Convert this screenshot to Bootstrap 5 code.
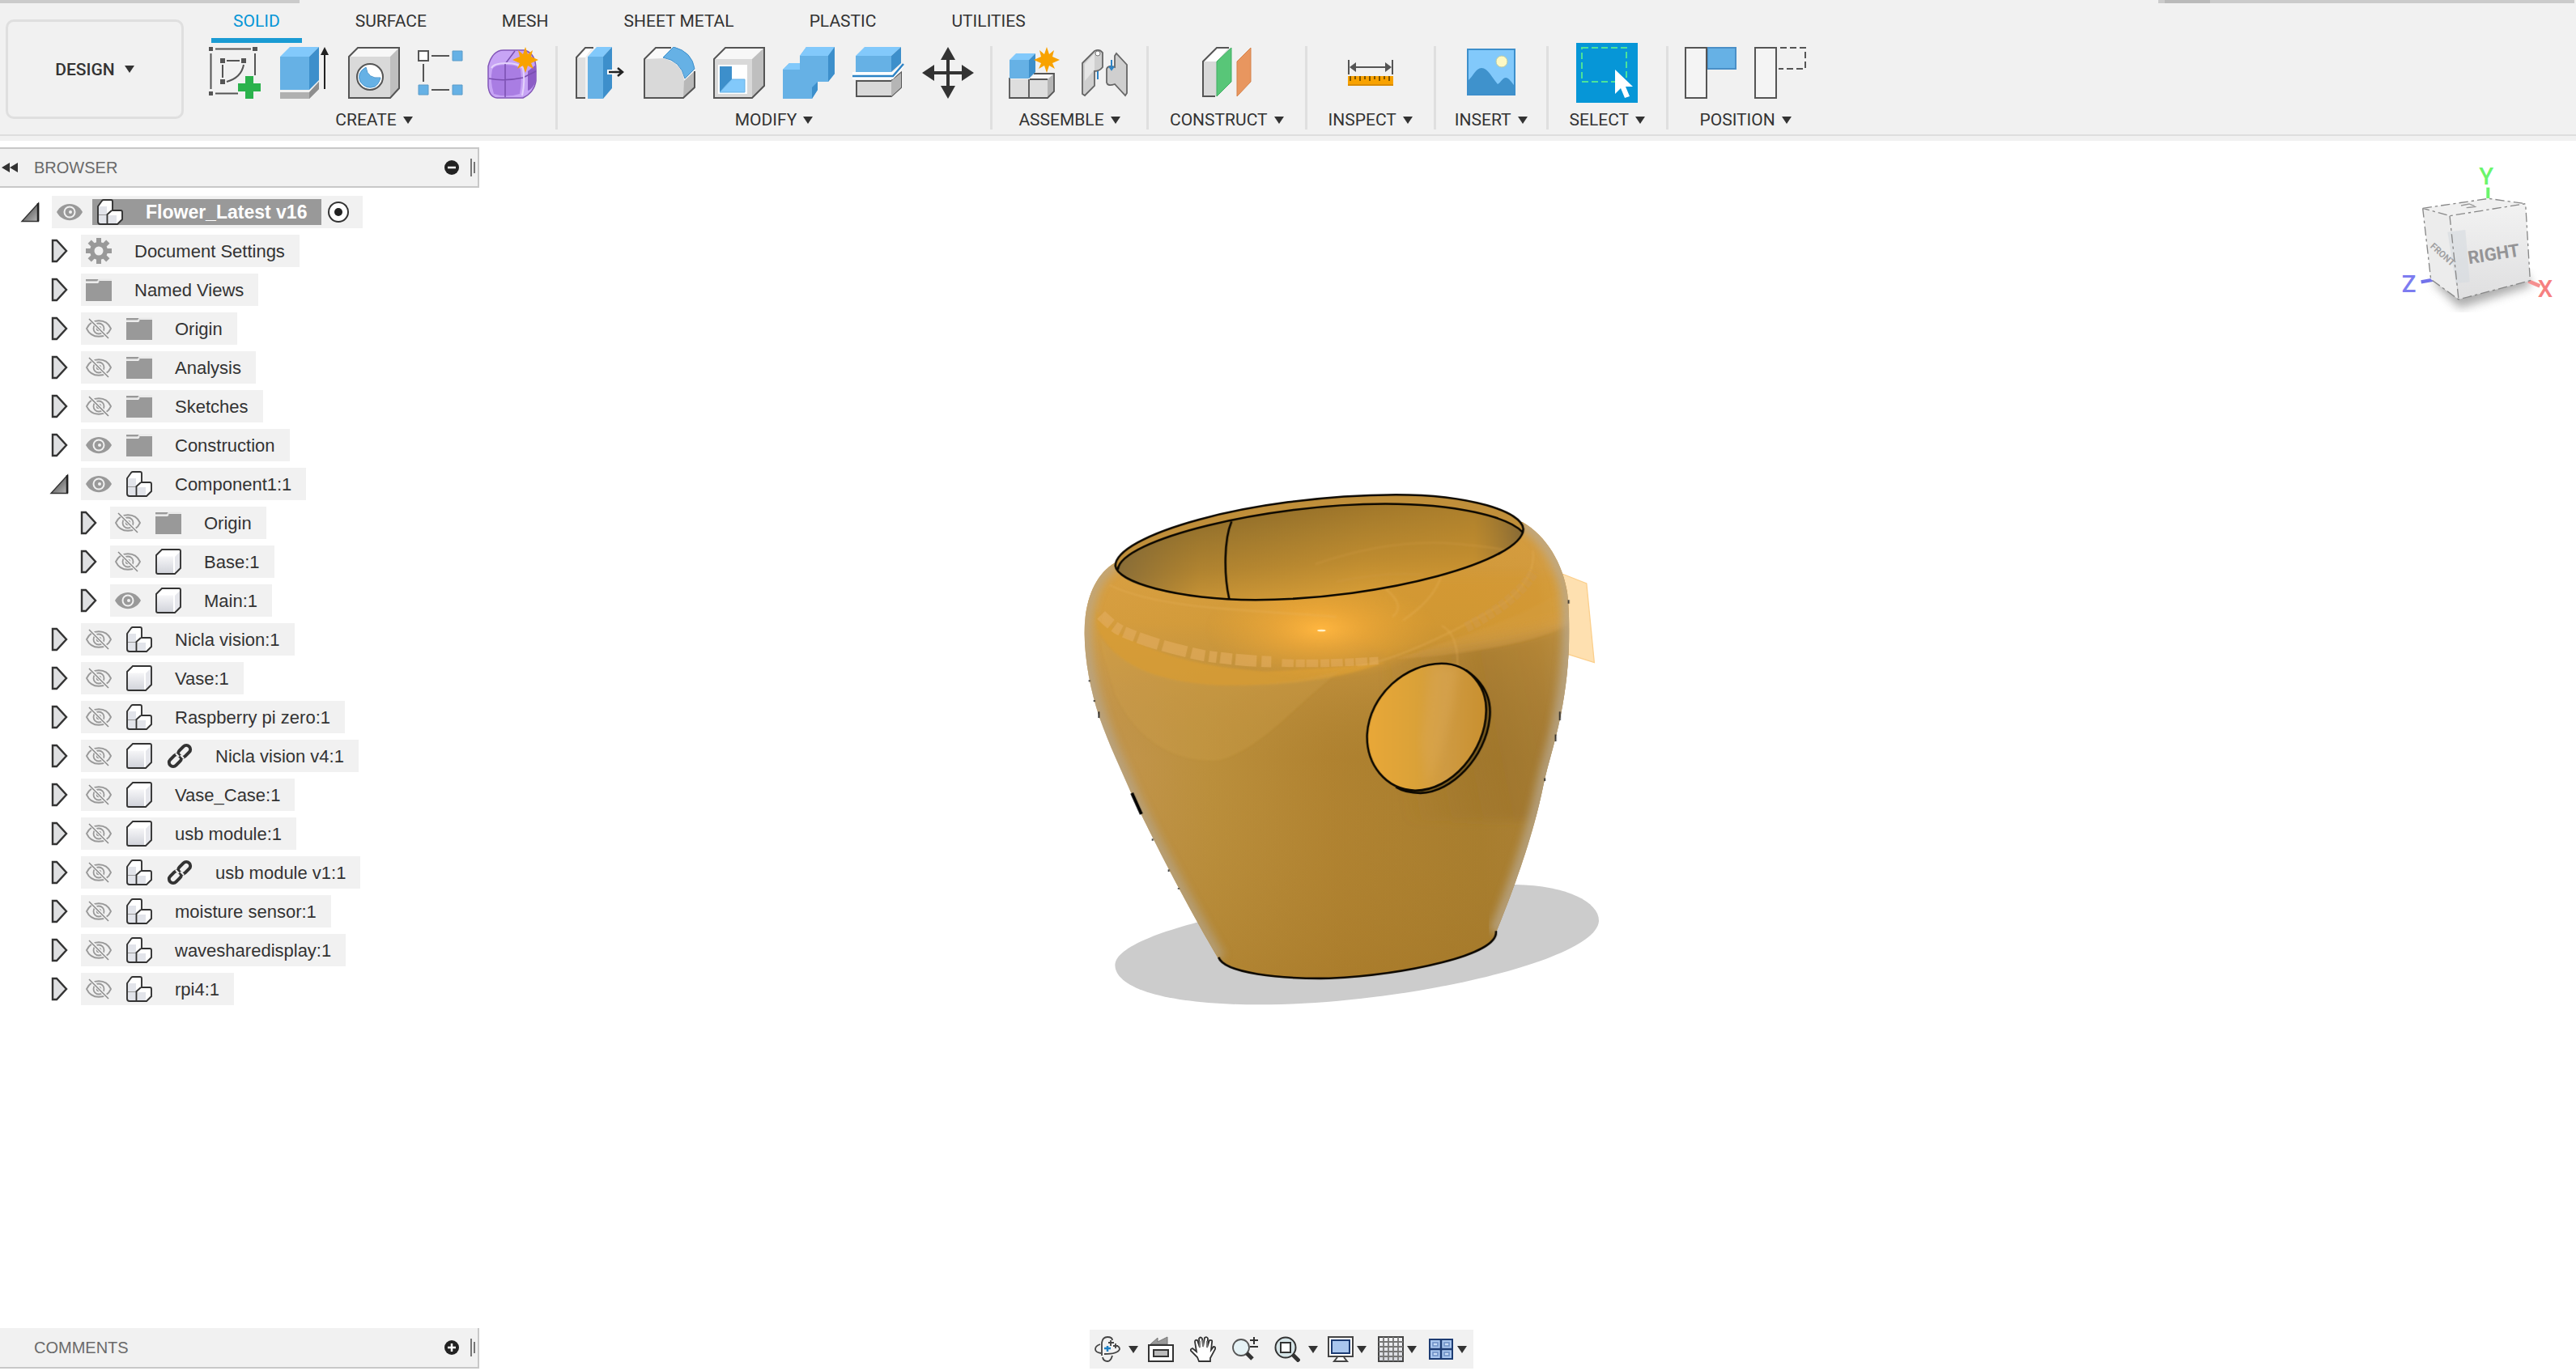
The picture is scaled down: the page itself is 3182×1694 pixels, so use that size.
<!DOCTYPE html>
<html lang="en">
<head>
<meta charset="utf-8">
<meta name="viewport" content="width=device-width, initial-scale=1">
<title>Flower_Latest v16</title>
<link href="https://cdn.jsdelivr.net/npm/bootstrap@5.3.0/dist/css/bootstrap.min.css" rel="stylesheet">
<style>
body{font-family:"Liberation Sans",Arial,sans-serif;font-size:22px;color:#333;background:#fff}
button{color:inherit;line-height:28px}
svg{display:block;flex:none}
.app-head{background:#f1f1f1;font-family:Roboto,sans-serif;font-size:21px;line-height:28px;padding-bottom:6px}
.head-main{border-bottom:2px solid #dedede}
.strip-l{width:370px;height:4px;background:#cbcbcb}
.strip-r{width:514px;height:4px;background:#cbcbcb;margin-right:2px;padding-left:8px}
.strip-r span{display:block;width:56px;height:4px;background:#bababa}
.design-btn{width:220px;height:123px;margin:20px 11px 0 7px;border:3px solid #dfdfdf;border-radius:10px;background:transparent;font-weight:500}
.caret-d{width:0;height:0;border:6px solid transparent;border-top:9px solid #333;border-bottom:0;flex:none}
.ws-tabs{padding-left:23px;gap:39px}
.ws-tab{padding:8px 27px 7px;border-bottom:6px solid transparent;color:#333;text-decoration:none}
.ws-tab.active{color:#0696d7;border-color:#1a9bd3}
.tool-group{padding:0 9px}
.tool-group.single{padding:0 26px}
.tool-group.snug{padding:0 23px}
.tool-cell{width:86px;height:74px}
.tool-cell.on{width:76px;background:#0696d7}
.group-name{margin:7px 0 4px;gap:8px}
.tool-sep{width:3px;margin:4px 0 6px;background:#dfdfdf}
.pane-head{width:592px;height:50px;background:#f1f1f1;border:2px solid #c8c8c8;border-left:0;font-size:20px;color:#6a6a6a;padding-right:3px}
.pane-head.foot{border-top:0}
.pane-arrow{width:42px;padding-left:2px}
.grip{width:6px;height:22px;margin-left:13px}
.browser{width:592px;padding-top:8px;z-index:1}
.tree{padding-top:10px}
.tree-row{height:40px;margin-bottom:8px;padding-left:60px}
.tree-row.root{padding-left:24px}
.tree-row.deep{padding-left:96px}
.tree-toggle{width:40px;height:40px}
.tree-chip{height:40px;background:#f1f1f1;padding:0 18px 0 6px;gap:18px}
.tree-name{margin-left:10px;white-space:nowrap}
.root-chip{gap:0;padding-right:16px}
.root-name{height:32px;background:#999;color:#fff;font-weight:700;font-size:23px;line-height:32px;margin:0 7px 0 12px;padding:0 18px 0 6px;gap:28px;white-space:nowrap}
.vase{position:absolute;left:41.5%;top:406px}
.cube{position:absolute;right:22px;top:26px}
.app-foot{padding-bottom:3px}
.foot-mid{padding-right:608px}
.nav-tools{height:48px;background:#f1f1f1;padding:0 8px 0 6px}
.nav-orbit .caret-d{margin:0 12px 0 10px}
.nav-plain{margin-right:20px}
.nav-fit .caret-d{margin:0 12px 0 10px}
.nav-view .caret-d{margin:0 14px 0 4px}
.nav-view:last-child .caret-d{margin-right:0}
</style>
</head>
<body>
<svg width="0" height="0" class="position-absolute">
<defs>
<linearGradient id="gTri" x1="0" y1="0" x2="1" y2="1"><stop offset="0" stop-color="#333"/><stop offset="1" stop-color="#bbb"/></linearGradient>
<linearGradient id="gFace" x1="0" y1="0" x2="0" y2="1"><stop offset="0" stop-color="#f6f6f8"/><stop offset="1" stop-color="#d2d4db"/></linearGradient>
<symbol id="closed" viewBox="0 0 40 40"><path d="M5 7H10L22 20 10 33H5Z" fill="#dfe0e2" stroke="#333" stroke-width="2.4"/></symbol>
<symbol id="open" viewBox="0 0 40 40"><path d="M3 31.500H23.500V9Z" fill="url(#gTri)" stroke="#333" stroke-width="1.400"/><path d="M23 9V31" stroke="#222" stroke-width="2.500"/></symbol>
<symbol id="eye" viewBox="0 0 32 32"><path d="M0 16C7 2.500 25 2.500 32 16 25 29.500 7 29.500 0 16Z" fill="#999"/><circle cx="16" cy="16" r="7.500" fill="#f1f1f1"/><circle cx="16" cy="16" r="5.500" fill="#999"/><circle cx="17" cy="16" r="2" fill="#f1f1f1"/></symbol>
<symbol id="eyeoff" viewBox="0 0 32 32"><path d="M1 16C7 3 25 3 31 16 25 29 7 29 1 16Z" fill="none" stroke="#999" stroke-width="1.800"/><circle cx="16" cy="16" r="6.500" fill="none" stroke="#999" stroke-width="1.800"/><circle cx="16" cy="16" r="2.500" fill="none" stroke="#999" stroke-width="1.500"/><path d="M5 4 28 28" stroke="#f1f1f1" stroke-width="4"/><path d="M4 4 28 28" stroke="#888" stroke-width="1.500"/></symbol>
<symbol id="folder" viewBox="0 0 32 32"><path d="M0 3H15L17 5 32 5V30H0V8H15L17 5.500H0Z" fill="#999"/><path d="M0 6.500H14L16.500 3.500H32" fill="none" stroke="#e8e8e8" stroke-width="1.600"/></symbol>
<symbol id="gear" viewBox="0 0 32 32"><g fill="#999"><circle cx="16" cy="16" r="11"/><rect x="13" y="0" width="6" height="32"/><rect x="0" y="13" width="32" height="6"/><g transform="rotate(45 16 16)"><rect x="13" y="0" width="6" height="32"/><rect x="0" y="13" width="32" height="6"/></g></g><circle cx="16" cy="16" r="5.500" fill="#f1f1f1"/></symbol>
<symbol id="comp" viewBox="0 0 32 32"><path d="M1 9 6 2Q7 1 8 1H17Q19 1 19 3V14H29Q31 14 31 16V25L25 31H4Q1 31 1 28Z" fill="#fff"/><path d="M2 9H12V19H2ZM2 20H12V30H2ZM14 20H24V30H14Z" fill="#e2e4ea"/><path d="M2 19.500H12" stroke="#999" stroke-width="1"/><path d="M1 9 6 2Q7 1 8 1H17Q19 1 19 3V14H29Q31 14 31 16V25L25 31H4Q1 31 1 28ZM12.500 31V19L18 14" fill="none" stroke="#333" stroke-width="1.900"/></symbol>
<symbol id="box" viewBox="0 0 32 32"><path d="M1 8 8 1H29Q31 1 31 3V24L24 31H3Q1 31 1 29Z" fill="#fff"/><path d="M2 9.500H22V30H2Z" fill="url(#gFace)"/><path d="M24 10 30 4V24L24 29Z" fill="#e6e7ec"/><path d="M1 8 8 1H29Q31 1 31 3V24L24 31H3Q1 31 1 29Z" fill="none" stroke="#333" stroke-width="1.900"/></symbol>
<symbol id="link" viewBox="0 0 32 32"><g fill="none" stroke="#333" stroke-width="4"><rect x="-9" y="-5" width="17" height="10" rx="5" transform="translate(22 10) rotate(-45)"/><rect x="-8" y="-5" width="17" height="10" rx="5" transform="translate(10 22) rotate(-45)"/></g><path d="M21 19 17 15M11 13 15 17" stroke="#f1f1f1" stroke-width="2"/></symbol>
<symbol id="grip" viewBox="0 0 6 22"><path d="M1 0V22M5 4V18" stroke="#777" stroke-width="2"/></symbol>
<symbol id="burst" viewBox="0 0 32 32"><path d="M16 0 19 9 25 4 23 12 32 16 23 20 26 27 19 23 16 32 13 23 6 27 9 20 0 16 9 12 7 4 13 9Z" fill="#f8a200"/></symbol>
</defs>
</svg>

<div class="d-flex flex-column min-vh-100">
<header class="app-head">
<div class="head-main">
<div class="d-flex justify-content-between"><div class="strip-l"></div><div class="strip-r"><span></span></div></div>
<div class="d-flex">
<button class="design-btn d-flex align-items-center justify-content-center gap-2">DESIGN <span class="caret-d ms-1"></span></button>
<div>
<nav class="ws-tabs d-flex">
<a class="ws-tab active" href="#">SOLID</a><a class="ws-tab" href="#">SURFACE</a><a class="ws-tab" href="#">MESH</a><a class="ws-tab" href="#">SHEET METAL</a><a class="ws-tab" href="#">PLASTIC</a><a class="ws-tab" href="#">UTILITIES</a>
</nav>
<div class="d-flex">
<div class="tool-group d-flex flex-column align-items-center">
<div class="d-flex">
<button class="tool-cell btn p-0 border-0 rounded-0 d-flex align-items-center justify-content-center" aria-label="Create sketch"><svg width="64" height="64" viewBox="0 0 64 64"><path d="M8 2.500H52M2.500 8V52M8 57.500H36M57 8V35" stroke="#555" stroke-width="2"/><path d="M0 0H5V5H0ZM54 0H60V5H54ZM0 55H5V60H0ZM14 14H20V20H14ZM40 14H46V20H40ZM14 40H20V46H14Z" fill="#555"/><path d="M22 17H38M17 22V38M43 22Q40 38 22 43" fill="none" stroke="#555" stroke-width="2"/><path d="M45 36H55V45H64V55H55V64H45V55H36V45H45Z" fill="#2bb24c"/></svg></button>
<button class="tool-cell btn p-0 border-0 rounded-0 d-flex align-items-center justify-content-center" aria-label="Extrude"><svg width="64" height="64" viewBox="0 0 64 64"><path d="M2 56H38L50 43V52L38 64H2Z" fill="#b0b0b0"/><path d="M38 56 50 43V52L38 64Z" fill="#8e8e8e"/><path d="M2 12H38V53H2Z" fill="#66b1e5"/><path d="M2 12 14 0H50L38 12Z" fill="#82c9fb"/><path d="M38 12 50 0V41L38 53Z" fill="#3d8fcb"/><path d="M57 6V52" stroke="#222" stroke-width="2"/><path d="M57 0 52 10H62Z" fill="#222"/></svg></button>
<button class="tool-cell btn p-0 border-0 rounded-0 d-flex align-items-center justify-content-center" aria-label="Revolve"><svg width="64" height="64" viewBox="0 0 64 64"><path d="M1 12 12 1H63L52 12Z" fill="#f7f7f7"/><path d="M52 12 63 1V51L52 63Z" fill="#bfbfbf"/><path d="M1 12H52V63H1Z" fill="#d9d9d9"/><path d="M1 12 12 1H63V51L52 63H1Z" fill="none" stroke="#555" stroke-width="2"/><circle cx="27" cy="37" r="16" fill="#fff" stroke="#555" stroke-width="2"/><path d="M22 25Q10 32 15 43 22 53 33 49 38 46 40 38 24 40 22 25Z" fill="#66b1e5" stroke="#4a97cf"/></svg></button>
<button class="tool-cell btn p-0 border-0 rounded-0 d-flex align-items-center justify-content-center" aria-label="Pattern"><svg width="64" height="64" viewBox="0 0 64 64"><path d="M1 5H13V17H1Z" fill="#fff" stroke="#555" stroke-width="2"/><g fill="#66b1e5" stroke="#5a9bc9"><path d="M43 5H55V17H43ZM43 47H55V59H43ZM1 47H13V59H1Z"/></g><path d="M17 11H39M7 21V43M17 53H39" stroke="#555" stroke-width="2"/></svg></button>
<button class="tool-cell btn p-0 border-0 rounded-0 d-flex align-items-center justify-content-center" aria-label="Create form"><svg width="64" height="64" viewBox="0 0 64 64"><path d="M1 24Q6 4 20 4H46Q60 8 60 28V42Q58 56 44 63H12Q2 62 1 48Z" fill="#c7a4f5" stroke="#8357b8" stroke-width="1.500"/><path d="M6 28Q8 22 22 22 38 22 41 28 43 42 40 58 24 63 8 58 3 42 6 28Z" fill="#a97de3"/><path d="M50 30 60 22V42Q56 52 50 54Z" fill="#8c5cc6"/><path d="M2 39Q20 43 44 38L60 30M22 62V21L34 5" fill="none" stroke="#7a4fb0" stroke-width="1.500"/><path d="M5 26Q8 20 24 20 38 20 44 26 47 42 43 60" fill="none" stroke="#e4d3fb" stroke-width="2"/><use href="#burst" x="31" y="0" width="32" height="32"/></svg></button>
</div>
<button class="group-name border-0 bg-transparent p-0 d-flex align-items-center">CREATE <span class="caret-d"></span></button>
</div>
<div class="tool-sep"></div>
<div class="tool-group d-flex flex-column align-items-center">
<div class="d-flex">
<button class="tool-cell btn p-0 border-0 rounded-0 d-flex align-items-center justify-content-center" aria-label="Press pull"><svg width="64" height="64" viewBox="0 0 64 64"><path d="M3 13 14 1H24L14 13V63H3Z" fill="#e0e0e0"/><path d="M3 13 14 1H23L14 13Z" fill="#fff"/><path d="M24 1H14L3 13V63H14" fill="none" stroke="#555" stroke-width="2"/><path d="M17 12H36V64H17Z" fill="#66b1e5"/><path d="M17 12 28 0H47L36 12Z" fill="#82c9fb"/><path d="M36 12 47 0V51L36 64Z" fill="#3d8fcb"/><path d="M41 28H50V34H41Z" fill="#fff"/><path d="M43 31H60M54 26 60 31 54 36" fill="none" stroke="#222" stroke-width="2.500"/></svg></button>
<button class="tool-cell btn p-0 border-0 rounded-0 d-flex align-items-center justify-content-center" aria-label="Fillet"><svg width="64" height="64" viewBox="0 0 64 64"><path d="M1 15 15 1H34L24 14Q48 20 50 42L63 30V50L49 63H1Z" fill="#d9d9d9"/><path d="M1 15 15 1H34L24 14Z" fill="#fafafa"/><path d="M50 42 63 30V50L49 63Z" fill="#b8b8b8"/><path d="M34 1H15L1 15V63H49L63 50V30" fill="none" stroke="#555" stroke-width="2"/><path d="M24 13 37 0Q60 6 63 27L51 39Q46 17 24 13Z" fill="#66b1e5" stroke="#3d8fcb"/></svg></button>
<button class="tool-cell btn p-0 border-0 rounded-0 d-flex align-items-center justify-content-center" aria-label="Shell"><svg width="64" height="64" viewBox="0 0 64 64"><path d="M1 15 15 1H63L48 15Z" fill="#f7f7f7"/><path d="M48 15 63 1V48L48 63Z" fill="#bfbfbf"/><path d="M1 15H48V63H1Z" fill="#d9d9d9"/><path d="M1 15 15 1H63V48L48 63H1Z" fill="none" stroke="#555" stroke-width="2"/><path d="M6 22H42V58H6Z" fill="#fff"/><path d="M8 24H23V40L8 56Z" fill="#3d8fcb"/><path d="M8 56 23 40H39V56Z" fill="#82c9fb" stroke="#66b1e5"/></svg></button>
<button class="tool-cell btn p-0 border-0 rounded-0 d-flex align-items-center justify-content-center" aria-label="Combine"><svg width="64" height="64" viewBox="0 0 64 64"><path d="M0 28 8 20H21V11L29 0H64V33L56 43H43V53L36 64H0Z" fill="#66b1e5"/><path d="M0 28 8 20H21V28ZM21 11 29 0H64L56 11Z" fill="#82c9fb"/><path d="M56 11 64 0V33L56 43ZM36 50 43 43V53L36 64Z" fill="#3d8fcb"/></svg></button>
<button class="tool-cell btn p-0 border-0 rounded-0 d-flex align-items-center justify-content-center" aria-label="Split"><svg width="64" height="64" viewBox="0 0 64 64"><path d="M5 42H48L60 32V50L48 61H5Z" fill="#d9d9d9" stroke="#555" stroke-width="2"/><path d="M48 42 60 32V50L48 61Z" fill="#b5b5b5"/><path d="M0 31H50L63 20V25L50 40H0Z" fill="#fff"/><path d="M0 36H50L63 21" fill="none" stroke="#2d83c5" stroke-width="2.500"/><path d="M4 11H48V31H4Z" fill="#66b1e5"/><path d="M4 11 15 0H60L48 11Z" fill="#82c9fb"/><path d="M48 11 60 0V20L48 31Z" fill="#3d8fcb"/></svg></button>
<button class="tool-cell btn p-0 border-0 rounded-0 d-flex align-items-center justify-content-center" aria-label="Move"><svg width="64" height="64" viewBox="0 0 64 64"><path d="M32 8V56M8 32H56" stroke="#333" stroke-width="4"/><path d="M32 0 41 16H23ZM32 64 41 48H23ZM0 32 15 22V42ZM64 32 49 22V42Z" fill="#333"/></svg></button>
</div>
<button class="group-name border-0 bg-transparent p-0 d-flex align-items-center">MODIFY <span class="caret-d"></span></button>
</div>
<div class="tool-sep"></div>
<div class="tool-group d-flex flex-column align-items-center">
<div class="d-flex">
<button class="tool-cell btn p-0 border-0 rounded-0 d-flex align-items-center justify-content-center" aria-label="New component"><svg width="64" height="64" viewBox="0 0 64 64"><path d="M1 40H25L33 33H56L48 40V63H1Z" fill="#dedede"/><path d="M25 40 33 33H56L48 40Z" fill="#f7f7f7"/><path d="M48 40 56 33V55L48 63Z" fill="#b5b5b5"/><path d="M1 38V63H48L56 55V33H31M25 40V63M26 40H48" fill="none" stroke="#555" stroke-width="1.800"/><path d="M1 16H25V39H1Z" fill="#66b1e5"/><path d="M1 16 9 8H33L25 16Z" fill="#82c9fb"/><path d="M25 16 33 8V31L25 39Z" fill="#3d8fcb"/><use href="#burst" x="31" y="0" width="32" height="32"/></svg></button>
<button class="tool-cell btn p-0 border-0 rounded-0 d-flex align-items-center justify-content-center" aria-label="Joint"><svg width="64" height="64" viewBox="0 0 64 64"><g stroke="#666" stroke-width="1.800"><path d="M5 20 20 5Q26 2 30 7V25Q26 30 20 30V48L8 60 5 58Z" fill="#cfcfcf"/><path d="M45 11 47 8 60 22V57L58 60 45 46Q36 49 35 44V27Q37 22 45 25Z" fill="#cfcfcf"/></g><path d="M8 21 20 8V28L8 42Z" fill="#e6e6e6"/><circle cx="24" cy="8" r="3" fill="#fff" stroke="#777"/><path d="M24 30V40M41 16V28M38 24 41 28 44 24" fill="none" stroke="#2d83c5" stroke-width="2"/></svg></button>
</div>
<button class="group-name border-0 bg-transparent p-0 d-flex align-items-center">ASSEMBLE <span class="caret-d"></span></button>
</div>
<div class="tool-sep"></div>
<div class="tool-group single d-flex flex-column align-items-center">
<button class="tool-cell btn p-0 border-0 rounded-0 d-flex align-items-center justify-content-center" aria-label="Offset plane"><svg width="64" height="64" viewBox="0 0 64 64"><path d="M3 18 20 1H37L20 18V61H3Z" fill="#d9d9d9"/><path d="M3 18 20 1H35L20 18Z" fill="#fff"/><path d="M35 1H20L3 18V61H18" fill="none" stroke="#555" stroke-width="2"/><path d="M20 18 38 1V43L20 61Z" fill="#58c678" stroke="#3fae62"/><path d="M45 18 62 1V43L45 61Z" fill="#e8965f" stroke="#d5824b"/></svg></button>
<button class="group-name border-0 bg-transparent p-0 d-flex align-items-center">CONSTRUCT <span class="caret-d"></span></button>
</div>
<div class="tool-sep"></div>
<div class="tool-group single d-flex flex-column align-items-center">
<button class="tool-cell btn p-0 border-0 rounded-0 d-flex align-items-center justify-content-center" aria-label="Measure"><svg width="64" height="64" viewBox="0 0 64 64"><path d="M5 16V34M59 16V34M10 25H54" stroke="#555" stroke-width="2"/><path d="M6 25 14 19V31ZM58 25 50 19V31Z" fill="#555"/><path d="M4 36H60V48H4Z" fill="#f8a200"/><path d="M4 46H60V48H4Z" fill="#d98b00"/><path d="M7 36V42M13 36V40M19 36V42M25 36V40M31 36V42M37 36V40M43 36V42M49 36V40M55 36V42" stroke="#553b00" stroke-width="1.500"/></svg></button>
<button class="group-name border-0 bg-transparent p-0 d-flex align-items-center">INSPECT <span class="caret-d"></span></button>
</div>
<div class="tool-sep"></div>
<div class="tool-group snug d-flex flex-column align-items-center">
<button class="tool-cell btn p-0 border-0 rounded-0 d-flex align-items-center justify-content-center" aria-label="Insert image"><svg width="64" height="64" viewBox="0 0 64 64"><path d="M3 3H61V59H3Z" fill="#82c9fb"/><circle cx="45" cy="18" r="7" fill="#fdf9c4" stroke="#b9c9a5"/><path d="M3 42C10 36 13 26 20 26 28 26 33 38 40 46 44 44 46 38 50 38 54 38 57 44 61 48V59H3Z" fill="#3f92cc"/><path d="M3 3H61V59H3Z" fill="none" stroke="#3d8fcb" stroke-width="2"/></svg></button>
<button class="group-name border-0 bg-transparent p-0 d-flex align-items-center">INSERT <span class="caret-d"></span></button>
</div>
<div class="tool-sep"></div>
<div class="tool-group single d-flex flex-column align-items-center">
<button class="tool-cell on btn p-0 border-0 rounded-0 d-flex align-items-center justify-content-center" aria-label="Select"><svg width="64" height="64" viewBox="0 0 64 64"><path d="M1 1H56V43H1Z" fill="none" stroke="#4be39a" stroke-width="2" stroke-dasharray="8 4"/><path d="M42 28V58L49 51 54 63 60 61 55 49H64Z" fill="#fff"/></svg></button>
<button class="group-name border-0 bg-transparent p-0 d-flex align-items-center">SELECT <span class="caret-d"></span></button>
</div>
<div class="tool-sep"></div>
<div class="tool-group d-flex flex-column align-items-center">
<div class="d-flex">
<button class="tool-cell btn p-0 border-0 rounded-0 d-flex align-items-center justify-content-center" aria-label="Capture position"><svg width="64" height="64" viewBox="0 0 64 64"><path d="M28 1H63V27H28Z" fill="#66b1e5" stroke="#4a8fc7" stroke-width="2"/><path d="M1 1H27V63H1Z" fill="#f4f4f4" stroke="#555" stroke-width="2"/></svg></button>
<button class="tool-cell btn p-0 border-0 rounded-0 d-flex align-items-center justify-content-center" aria-label="Revert position"><svg width="64" height="64" viewBox="0 0 64 64"><path d="M32 1H63V27H30" fill="none" stroke="#555" stroke-width="2" stroke-dasharray="8 4"/><path d="M1 1H27V63H1Z" fill="#f4f4f4" stroke="#555" stroke-width="2"/></svg></button>
</div>
<button class="group-name border-0 bg-transparent p-0 d-flex align-items-center">POSITION <span class="caret-d"></span></button>
</div>
</div>
</div>
</div>
</div>
</header>

<main class="flex-grow-1 position-relative">
<svg class="vase" width="680" height="680" viewBox="0 0 1568 1568" role="img" aria-label="Flower pot model">
<defs>
<linearGradient id="bodyX" gradientUnits="userSpaceOnUse" x1="40" y1="800" x2="1425" y2="700"><stop offset="0" stop-color="#c0a070"/><stop offset=".07" stop-color="#c2954c"/><stop offset=".25" stop-color="#bb8f3c"/><stop offset=".5" stop-color="#b08230"/><stop offset=".8" stop-color="#a67c2d"/><stop offset=".95" stop-color="#ab8036"/><stop offset="1" stop-color="#b69a6c"/></linearGradient>
<linearGradient id="bodyY" x1="0" y1="0" x2="0" y2="1"><stop offset="0" stop-color="#e3a643" stop-opacity=".75"/><stop offset=".22" stop-color="#d99e3a" stop-opacity=".8"/><stop offset=".36" stop-color="#c89642" stop-opacity=".45"/><stop offset=".52" stop-color="#b88d3c" stop-opacity="0"/><stop offset="1" stop-color="#a47626" stop-opacity=".45"/></linearGradient>
<linearGradient id="dim" gradientUnits="userSpaceOnUse" x1="900" y1="700" x2="1400" y2="600"><stop offset="0" stop-color="#9c722a" stop-opacity="0"/><stop offset=".6" stop-color="#9c722a" stop-opacity=".6"/><stop offset="1" stop-color="#a37a34" stop-opacity=".5"/></linearGradient>
<radialGradient id="hot" gradientUnits="userSpaceOnUse" cx="715" cy="455" r="330" gradientTransform="translate(0 250) scale(1 .45)"><stop offset="0" stop-color="#ffb640"/><stop offset=".4" stop-color="#f5ac39" stop-opacity=".6"/><stop offset="1" stop-color="#e8a636" stop-opacity="0"/></radialGradient>
<linearGradient id="inside" x1="0" y1="0" x2=".25" y2="1"><stop offset="0" stop-color="#856426"/><stop offset=".35" stop-color="#a17a2e"/><stop offset=".7" stop-color="#bd8c32"/><stop offset="1" stop-color="#dca23a"/></linearGradient>
<linearGradient id="insideX" x1="0" y1="0" x2="1" y2="0"><stop offset="0" stop-color="#75623c" stop-opacity=".7"/><stop offset=".2" stop-color="#8a6a2c" stop-opacity=".25"/><stop offset=".6" stop-color="#c48d2c" stop-opacity=".3"/><stop offset=".88" stop-color="#c48d2c" stop-opacity=".5"/><stop offset="1" stop-color="#7a6238" stop-opacity=".75"/></linearGradient>
<linearGradient id="hole" x1="0" y1="0" x2="1" y2="0"><stop offset="0" stop-color="#e9a838"/><stop offset=".4" stop-color="#dba238"/><stop offset=".65" stop-color="#cf9b43"/><stop offset="1" stop-color="#c9902f"/></linearGradient>
<clipPath id="bodyClip"><path d="M131 265C70 300 42 380 43 470 44 545 60 630 85 705 115 790 145 850 175 920 220 1020 330 1235 425 1395 480 1440 600 1452 740 1450 950 1440 1205 1390 1215 1320 1260 1210 1320 1050 1350 900 1365 830 1390 760 1405 670 1425 560 1428 440 1418 350 1405 270 1360 190 1290 150Z"/></clipPath>
<filter id="soft"><feGaussianBlur stdDeviation="12"/></filter>
<filter id="haze"><feGaussianBlur stdDeviation="3"/></filter>
</defs>
<path d="M130 1412C130 1300 800 1180 1270 1183 1420 1185 1510 1235 1508 1287 1500 1400 950 1525 540 1525 280 1525 130 1480 130 1412Z" fill="#ccc"/>
<path d="M1405 298 1473 325 1495 550 1415 525Z" fill="#fee0b0" stroke="#fbcf8c" stroke-width="3"/>
<g clip-path="url(#bodyClip)">
<path d="M0 60H1568V1500H0Z" fill="url(#bodyX)"/>
<path d="M0 150H1568V1450H0Z" fill="url(#bodyY)"/>
<path d="M900 530Q1250 510 1430 440V1000H900Z" fill="url(#dim)" filter="url(#soft)"/>
<g filter="url(#haze)">
<path d="M75 400C120 480 300 560 560 575 700 570 800 560 900 550 760 600 600 620 420 615 250 605 120 560 75 440Z" fill="#d79c35" opacity=".8"/>
<path d="M80 470C150 570 300 610 430 615 560 618 660 600 780 570 660 650 560 790 430 828 300 840 190 770 130 640Z" fill="#d2a04c" opacity=".28"/>
<path d="M930 540C1100 530 1320 500 1425 440V330C1300 420 1100 480 930 540Z" fill="#d3a14c" opacity=".35"/>
</g>
<path d="M600 300H1425V420C1250 470 1000 500 900 540 840 480 700 420 600 400Z" fill="#d89a2c" opacity=".3" filter="url(#soft)"/>
<path d="M100 70H1100V780H100Z" fill="url(#hot)"/>
<path d="M90 415Q130 455 160 465 240 500 380 530 480 545 575 548" fill="none" stroke="#e2ac5e" stroke-width="32" stroke-dasharray="38 12 22 10 34 10 60 14 70 14" opacity=".65"/>
<path d="M605 551Q700 556 880 545" fill="none" stroke="#e2ac5e" stroke-width="22" stroke-dasharray="34 6 26 4" opacity=".6"/>
<path d="M115 330C260 400 520 400 760 420M900 340Q960 390 920 420M950 430Q1040 370 1060 300M1060 445Q1110 470 1105 570M820 560Q960 540 1240 380 1330 310 1320 230" fill="none" stroke="#eab662" stroke-width="4" opacity=".4" filter="url(#haze)"/>
<path d="M1130 450Q1270 380 1325 290" fill="none" stroke="#cf9a48" stroke-width="30" opacity=".6" stroke-dasharray="18 5"/>
<path d="M131 265C70 300 42 380 43 470 44 545 60 630 85 705 115 790 145 850 175 920 220 1020 330 1235 425 1395" fill="none" stroke="#b3aa9b" stroke-width="42" opacity=".6" filter="url(#soft)"/>
<path d="M1215 1320C1260 1210 1320 1050 1350 900 1365 830 1390 760 1405 670 1425 560 1428 440 1418 350 1405 270 1360 190 1290 150" fill="none" stroke="#b9ab94" stroke-width="40" opacity=".75" filter="url(#soft)"/>
<ellipse cx="718" cy="459" rx="12" ry="3" fill="#fff4cf"/>
</g>
<path d="M131 275C130 190 500 75 930 72 1140 72 1290 120 1293 170 1290 260 900 370 530 372 300 370 135 320 131 275Z" fill="#c08f3a"/>
<path d="M138 288C145 200 560 98 900 98 1100 98 1250 135 1290 178 1280 265 900 370 530 372 310 370 150 330 138 288Z" fill="url(#inside)"/>
<path d="M138 288C145 200 560 98 900 98 1100 98 1250 135 1290 178 1280 265 900 370 530 372 310 370 150 330 138 288Z" fill="url(#insideX)"/>
<path d="M700 270Q900 200 1080 210 1200 220 1240 230M760 320Q900 290 1010 300" fill="none" stroke="#cf9a45" stroke-width="5" opacity=".4" filter="url(#haze)"/>
<path d="M131 275C130 190 500 75 930 72 1140 72 1290 120 1293 170 1290 260 900 370 530 372 300 370 135 320 131 275ZM138 285C145 200 560 98 900 98 1100 98 1250 135 1290 178M462 148C440 200 440 300 455 368" fill="none" stroke="#0c0800" stroke-width="6"/>
<path d="M1060 553C1140 553 1203 620 1197 700 1185 820 1090 920 1000 922 900 920 845 840 848 755 855 640 960 553 1060 553Z" fill="#7e5f22"/>
<path d="M1060 553C1140 553 1190 620 1187 690 1185 800 1090 915 985 915 900 912 845 840 848 755 855 640 960 553 1060 553Z" fill="url(#hole)"/>
<path d="M1030 560 1110 565 1090 680 1060 800 1020 900 1000 780Z" fill="#dca956" opacity=".4" filter="url(#soft)"/>
<path d="M1060 553C1140 553 1190 620 1187 690 1185 800 1090 915 985 915 900 912 845 840 848 755 855 640 960 553 1060 553ZM1130 572C1185 610 1203 660 1197 710 1185 820 1090 920 1000 922 975 922 950 918 930 905" fill="none" stroke="#0c0800" stroke-width="6"/>
<path d="M425 1390C440 1435 600 1452 740 1450 950 1440 1225 1385 1215 1315" fill="none" stroke="#0c0800" stroke-width="6"/>
<path d="M178 922 205 982" stroke="#000" stroke-width="9"/>
<path d="M57 600V605M71 657V662M84 690V708M237 1052V1058M283 1140V1146M311 1192V1196M1422 372V382M1397 690V715M1385 755V775M1354 880V888" stroke="#222" stroke-width="4"/>
</svg>
<svg class="cube" width="200" height="200" viewBox="180 90 600 600" role="img" aria-label="View cube" font-family="Roboto,sans-serif">
<defs><filter id="sh"><feGaussianBlur stdDeviation="18"/></filter><linearGradient id="cf" x1="0" y1="0" x2="0" y2="1"><stop offset="0" stop-color="#f2f2f2"/><stop offset="1" stop-color="#dfdfe0"/></linearGradient></defs>
<path d="M310 530 415 632 680 550 660 500Z" fill="#777" opacity=".6" filter="url(#sh)"/>
<path d="M520 185V225" stroke="#6bf56b" stroke-width="12"/>
<path d="M272 535 322 526" stroke="#7272ea" stroke-width="13"/><path d="M670 532 712 550" stroke="#f59090" stroke-width="14"/>
<path d="M278 262 522 226 659 245 378 290Z" fill="#f0f0f0"/><path d="M278 262 378 290 411 600 308 525Z" fill="#ececec"/><path d="M378 290 659 245 676 530 411 600Z" fill="url(#cf)"/>
<path d="M370 350 436 342 452 535 400 540Z" fill="#d5dae0" opacity=".6"/>
<path d="M278 262 522 226 659 245 378 290ZM278 262 308 525 411 600 676 530 659 245M378 290 411 600" fill="none" stroke="#888" stroke-width="4" stroke-dasharray="34 12 10 12"/>
<path d="M420 252 450 246 470 254M440 260 476 256" fill="none" stroke="#999" stroke-width="4"/>
<text x="449" y="469" font-size="66" font-weight="700" fill="#949496" transform="rotate(-9 449 469)">RIGHT</text>
<text x="304" y="406" font-size="34" font-weight="700" fill="#a0a0a2" transform="rotate(42 304 406)">FRONT</text>
<g font-size="88" font-weight="500"><text x="487" y="175" fill="#6bf56b">Y</text><text x="200" y="573" fill="#7c7cf0">Z</text><text x="704" y="592" fill="#f68080">X</text></g>
</svg>

<aside class="browser position-relative">
<div class="pane-head d-flex align-items-center">
<div class="pane-arrow"><svg width="20" height="12" viewBox="0 0 20 12"><path d="M0 6 10 0V12ZM10 6 20 0V12Z" fill="#333"/></svg></div>
<span>BROWSER</span>
<button class="border-0 bg-transparent p-0 ms-auto" aria-label="Collapse"><svg width="20" height="20" viewBox="0 0 20 20"><circle cx="10" cy="10" r="9" fill="#222"/><path d="M5 10H15" stroke="#fff" stroke-width="2.500"/></svg></button>
<svg class="grip"><use href="#grip"/></svg>
</div>
<ul class="tree list-unstyled mb-0">
<li class="tree-row root d-flex"><button class="tree-toggle border-0 bg-transparent p-0" aria-label="Collapse"><svg width="40" height="40"><use href="#open"/></svg></button><div class="tree-chip root-chip d-flex align-items-center"><svg width="32" height="32"><use href="#eye"/></svg><div class="root-name d-flex"><svg width="32" height="32"><use href="#comp"/></svg><span>Flower_Latest v16</span></div><svg width="28" height="28" viewBox="0 0 28 28"><circle cx="14" cy="14" r="12" fill="#fff" stroke="#333" stroke-width="2"/><circle cx="14" cy="14" r="5" fill="#222"/></svg></div></li>
</ul>
</aside>
</main>

<footer class="app-foot d-flex align-items-end">
<div class="pane-head foot d-flex align-items-center">
<div class="pane-arrow"></div>
<span>COMMENTS</span>
<button class="border-0 bg-transparent p-0 ms-auto" aria-label="Add comment"><svg width="20" height="20" viewBox="0 0 20 20"><circle cx="10" cy="10" r="9" fill="#222"/><path d="M5 10H15M10 5V15" stroke="#fff" stroke-width="2.500"/></svg></button>
<svg class="grip"><use href="#grip"/></svg>
</div>
<div class="foot-mid flex-grow-1 d-flex justify-content-center">
<div class="nav-tools d-flex align-items-center">
<button class="nav-orbit border-0 bg-transparent p-0 d-flex align-items-center" aria-label="Orbit"><svg width="32" height="32" viewBox="0 0 32 32"><g fill="none" stroke="#444" stroke-width="1.800"><path d="M9 24V8Q10 1 16 1 22 1 22 5M22 24Q20 31 16 31 11 31 10 26M28 12Q31 13 31 16 29 22 12 22M8 21Q1 20 1 16 1 12 7 10"/><path d="M20 5V12M17 8H24M26 9V15M23 12H29"/></g><path d="M16 12V19M12 15H20" stroke="#1c7fc4" stroke-width="2.500"/></svg><span class="caret-d"></span></button>
<button class="nav-plain border-0 bg-transparent p-0" aria-label="Look at"><svg width="32" height="32" viewBox="0 0 32 32"><path d="M3 10 12 2V7L24 1V10Z" fill="#999" stroke="#777"/><path d="M1 11H31V31H1Z" fill="#fff" stroke="#333" stroke-width="2"/><path d="M7 17H25V25H7Z" fill="#bbb" stroke="#333" stroke-width="2"/></svg></button>
<button class="nav-plain border-0 bg-transparent p-0" aria-label="Pan"><svg width="32" height="32" viewBox="0 0 32 32"><path d="M11 31 9 26 1 18Q0 16 3 15L8 19 6 7Q6 4 9 5L12 14 11 3Q13 0 15 3L16 13 18 2Q21 0 22 3L21 14 24 5Q28 4 27 8L26 17 29 13Q32 13 31 16L25 27V31Z" fill="#fff" stroke="#333" stroke-width="1.800"/><path d="M12 14V6M16 13V5M21 14V6" stroke="#777" stroke-width="2"/></svg></button>
<button class="nav-plain border-0 bg-transparent p-0" aria-label="Zoom"><svg width="32" height="32" viewBox="0 0 32 32"><circle cx="11" cy="14" r="10" fill="#e5f2f5" stroke="#555" stroke-width="1.800"/><path d="M18 21 25 28" stroke="#333" stroke-width="5"/><path d="M27 1V10M22 5H32M22 13H32" stroke="#333" stroke-width="2"/></svg></button>
<button class="nav-fit border-0 bg-transparent p-0 d-flex align-items-center" aria-label="Fit"><svg width="32" height="32" viewBox="0 0 32 32"><circle cx="14" cy="14" r="12.500" fill="#d6e5e8" stroke="#333" stroke-width="2"/><path d="M8 8H20V20H8Z" fill="#fff" stroke="#333" stroke-width="2"/><path d="M23 23 31 31" stroke="#333" stroke-width="5"/></svg><span class="caret-d"></span></button>
<button class="nav-view border-0 bg-transparent p-0 d-flex align-items-center" aria-label="Display settings"><svg width="32" height="32" viewBox="0 0 32 32"><path d="M1 1H31V25H1Z" fill="#fff" stroke="#444" stroke-width="2"/><path d="M5 5H27V21H5Z" fill="#a9c6ee" stroke="#1d3c73" stroke-width="2"/><path d="M12 26 8 31H24L20 26" fill="#fff" stroke="#444" stroke-width="2"/></svg><span class="caret-d"></span></button>
<button class="nav-view border-0 bg-transparent p-0 d-flex align-items-center" aria-label="Grid and snaps"><svg width="32" height="32" viewBox="0 0 32 32"><path d="M1 1H31V31H1Z" fill="url(#gFace)" stroke="#444" stroke-width="2"/><path d="M7 1V31M13 1V31M19 1V31M25 1V31M1 7H31M1 13H31M1 19H31M1 25H31" stroke="#777" stroke-width="1.800"/></svg><span class="caret-d"></span></button>
<button class="nav-view border-0 bg-transparent p-0 d-flex align-items-center" aria-label="Viewports"><svg width="32" height="32" viewBox="0 0 32 32"><path d="M2 4H30V28H2Z" fill="#a9c6ee" stroke="#1d3c73" stroke-width="2"/><path d="M16 4V28M2 16H30" stroke="#1d3c73" stroke-width="2.500"/><path d="M6 8H12V12H6ZM20 8H26V12H20ZM6 20H12V24H6ZM20 20H26V24H20Z" fill="#c9dcf6" stroke="#6c8fc4" stroke-width="1.500"/></svg><span class="caret-d"></span></button>
</div>
</div>
</footer>
</div>
<script src="https://cdn.jsdelivr.net/npm/bootstrap@5.3.0/dist/js/bootstrap.bundle.min.js"></script>
<script>
// name, icons shown before it, nested flag, expanded flag
const nodes = [
["Document Settings",["gear"]],["Named Views",["folder"]],
["Origin",["eyeoff","folder"]],["Analysis",["eyeoff","folder"]],["Sketches",["eyeoff","folder"]],
["Construction",["eye","folder"]],["Component1:1",["eye","comp"],0,1],
["Origin",["eyeoff","folder"],1],["Base:1",["eyeoff","box"],1],["Main:1",["eye","box"],1],
["Nicla vision:1",["eyeoff","comp"]],["Vase:1",["eyeoff","box"]],["Raspberry pi zero:1",["eyeoff","comp"]],
["Nicla vision v4:1",["eyeoff","box","link"]],["Vase_Case:1",["eyeoff","box"]],["usb module:1",["eyeoff","box"]],
["usb module v1:1",["eyeoff","comp","link"]],["moisture sensor:1",["eyeoff","comp"]],
["wavesharedisplay:1",["eyeoff","comp"]],["rpi4:1",["eyeoff","comp"]]];
const icon = (n, s) => `<svg width="${s}" height="${s}"><use href="#${n}"/></svg>`;
document.querySelector(".tree").insertAdjacentHTML("beforeend", nodes.map(([name, icons, deep, open]) =>
`<li class="tree-row d-flex ${deep ? "deep" : ""}"><button class="tree-toggle border-0 bg-transparent p-0" aria-label="Toggle ${name}">${icon(open ? "open" : "closed", 40)}</button><div class="tree-chip d-flex align-items-center">${icons.map(i => icon(i, 32)).join("")}<span class="tree-name">${name}</span></div></li>`).join(""));
</script>
</body>
</html>
